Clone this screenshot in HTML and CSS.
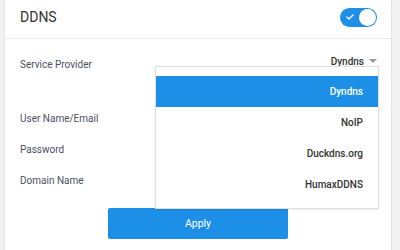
FILE: index.html
```html
<!DOCTYPE html>
<html>
<head>
<meta charset="utf-8">
<link rel="stylesheet" href="styles.css">
</head>
<body>
<div class="card">
  <div class="header">
    <span class="title">DDNS</span>
    <span class="toggle">
      <svg class="check" width="8" height="6" viewBox="0 0 8 6"><path d="M1 3 L3 5 L7 1" fill="none" stroke="#fff" stroke-width="1.4" stroke-linecap="round" stroke-linejoin="round"/></svg>
      <span class="knob"></span>
    </span>
  </div>
  <div class="body">
    <div class="row first">
      <span class="label">Service Provider</span>
      <span class="select">Dyndns <span class="caret"></span></span>
    </div>
    <div class="row"><span class="label">User Name/Email</span></div>
    <div class="row"><span class="label">Password</span></div>
    <div class="row"><span class="label">Domain Name</span></div>
    <div class="actions"><button class="apply">Apply</button></div>
    <ul class="menu">
      <li class="active">Dyndns</li>
      <li>NoIP</li>
      <li>Duckdns.org</li>
      <li>HumaxDDNS</li>
    </ul>
  </div>
</div>
</body>
</html>
```
FILE: styles.css
```css
html, body {
  margin: 0;
  padding: 0;
}
body {
  background: #f2f2f2;
  font-family: Roboto, "Liberation Sans", sans-serif;
  width: 400px;
  height: 250px;
  overflow: hidden;
}
.card {
  margin-left: 4px;
  width: 386px;
  height: 250px;
  background: #fff;
  border-left: 1px solid #e3e3e3;
  border-right: 1px solid #e3e3e3;
}
.header {
  height: 34px;
  padding: 0 14px 4px 15px;
  border-bottom: 1px solid #e6e6e6;
  display: flex;
  align-items: center;
  justify-content: space-between;
}
.title {
  font-size: 14px;
  color: #333;
}
.toggle {
  position: relative;
  width: 37px;
  height: 19px;
  border-radius: 10px;
  background: #1d8fe6;
  display: flex;
  align-items: center;
  justify-content: space-between;
  padding: 0 1px 0 6px;
  box-sizing: border-box;
}
.check {
  display: block;
}
.knob {
  width: 17px;
  height: 17px;
  border-radius: 50%;
  background: #fff;
}
.body {
  position: relative;
  padding-top: 10px;
}
.row {
  height: 31px;
  padding: 0 14px 0 15px;
  display: flex;
  align-items: center;
  justify-content: space-between;
}
.row.first {
  margin-bottom: 23px;
}
.label {
  font-size: 10px;
  color: #4a5264;
}
.select {
  font-size: 10px;
  font-weight: 500;
  color: #333;
  display: flex;
  align-items: center;
  gap: 5px;
  margin-top: -7px;
}
.caret {
  width: 0;
  height: 0;
  border-left: 4px solid transparent;
  border-right: 4px solid transparent;
  border-top: 4px solid #9a9a9a;
}
.actions {
  display: flex;
  justify-content: center;
  margin-top: 12px;
}
.apply {
  width: 180px;
  height: 31px;
  border: 0;
  border-radius: 2px;
  background: #1d8fe6;
  color: #fff;
  font-family: Roboto, "Liberation Sans", sans-serif;
  font-size: 10.5px;
}
.menu {
  position: absolute;
  left: 150px;
  top: 27px;
  width: 222px;
  margin: 0;
  padding: 9px 0 8px;
  list-style: none;
  background: #fff;
  border: 1px solid #dedede;
  box-shadow: 0 1px 2px rgba(0,0,0,0.08);
}
.menu li {
  height: 31px;
  line-height: 31px;
  text-align: right;
  padding-right: 15px;
  font-size: 10px;
  font-weight: 500;
  color: #333;
}
.menu li.active {
  background: #1d8fe6;
  color: #fff;
}
```
